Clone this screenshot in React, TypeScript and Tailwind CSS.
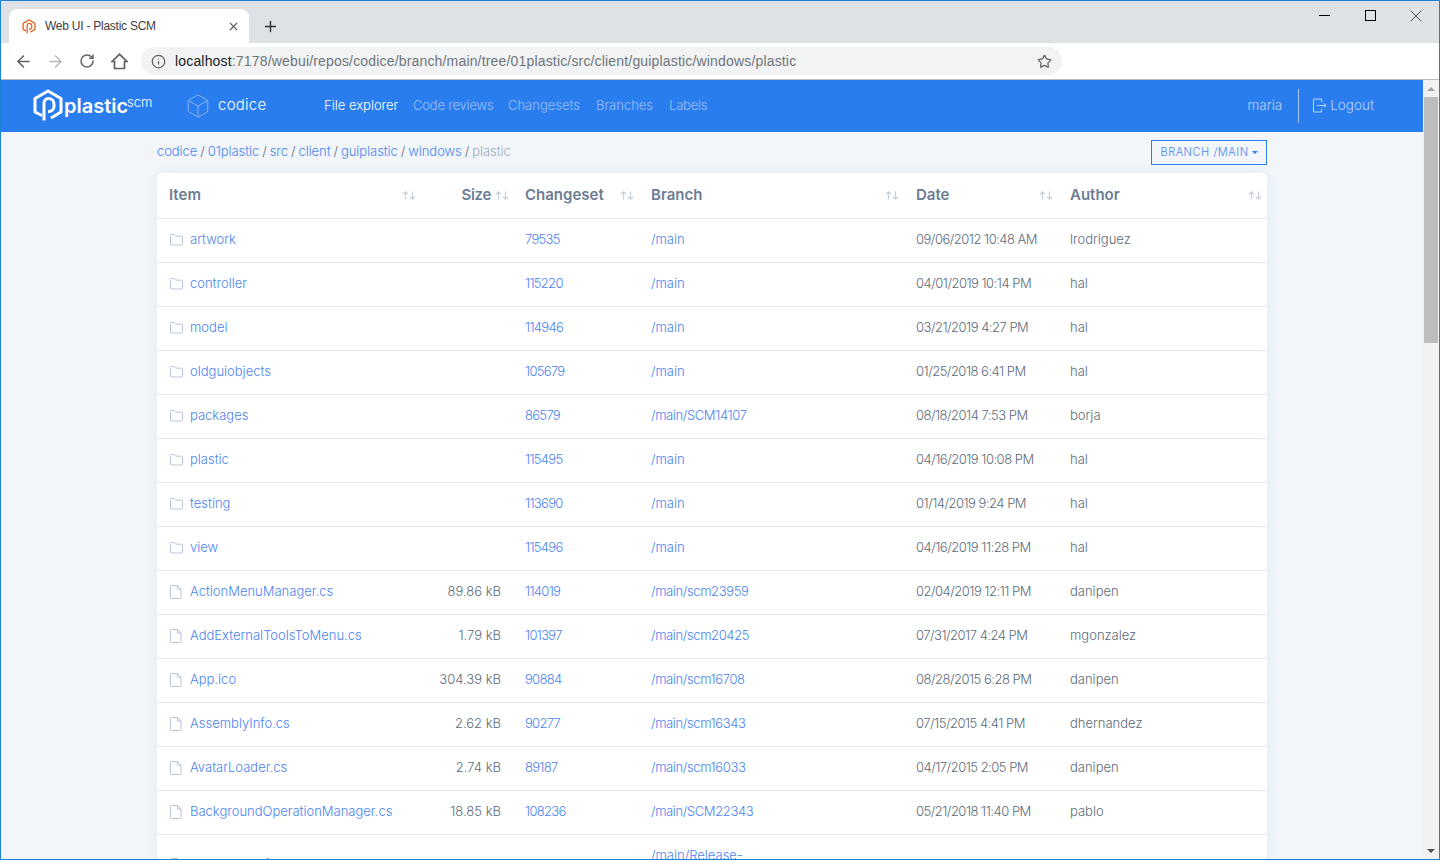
import { ArrowLeft, ArrowRight, RotateCw, Star, Info, Box, X, Plus } from "lucide-react";

type Row = { kind: "d" | "f"; name: string; size?: string; cs: string; branch: string; date: string; author: string };

const rows: Row[] = [
  { kind: "d", name: "artwork", cs: "79535", branch: "/main", date: "09/06/2012 10:48 AM", author: "lrodriguez" },
  { kind: "d", name: "controller", cs: "115220", branch: "/main", date: "04/01/2019 10:14 PM", author: "hal" },
  { kind: "d", name: "model", cs: "114946", branch: "/main", date: "03/21/2019 4:27 PM", author: "hal" },
  { kind: "d", name: "oldguiobjects", cs: "105679", branch: "/main", date: "01/25/2018 6:41 PM", author: "hal" },
  { kind: "d", name: "packages", cs: "86579", branch: "/main/SCM14107", date: "08/18/2014 7:53 PM", author: "borja" },
  { kind: "d", name: "plastic", cs: "115495", branch: "/main", date: "04/16/2019 10:08 PM", author: "hal" },
  { kind: "d", name: "testing", cs: "113690", branch: "/main", date: "01/14/2019 9:24 PM", author: "hal" },
  { kind: "d", name: "view", cs: "115496", branch: "/main", date: "04/16/2019 11:28 PM", author: "hal" },
  { kind: "f", name: "ActionMenuManager.cs", size: "89.86 kB", cs: "114019", branch: "/main/scm23959", date: "02/04/2019 12:11 PM", author: "danipen" },
  { kind: "f", name: "AddExternalToolsToMenu.cs", size: "1.79 kB", cs: "101397", branch: "/main/scm20425", date: "07/31/2017 4:24 PM", author: "mgonzalez" },
  { kind: "f", name: "App.ico", size: "304.39 kB", cs: "90884", branch: "/main/scm16708", date: "08/28/2015 6:28 PM", author: "danipen" },
  { kind: "f", name: "AssemblyInfo.cs", size: "2.62 kB", cs: "90277", branch: "/main/scm16343", date: "07/15/2015 4:41 PM", author: "dhernandez" },
  { kind: "f", name: "AvatarLoader.cs", size: "2.74 kB", cs: "89187", branch: "/main/scm16033", date: "04/17/2015 2:05 PM", author: "danipen" },
  { kind: "f", name: "BackgroundOperationManager.cs", size: "18.85 kB", cs: "108236", branch: "/main/SCM22343", date: "05/21/2018 11:40 PM", author: "pablo" },
];

const cols = "grid grid-cols-[264px_92px_126px_265px_154px_209px]";

function Sort() {
  return (
    <svg width="14" height="9" viewBox="0 0 14 9" fill="none" stroke="#c6d0da" strokeWidth="1.2" className="shrink-0">
      <path d="M3.5 8.5V1M1 3.2L3.5.8 6 3.2" />
      <path d="M10.5.5V8M8 5.8l2.5 2.4L13 5.8" />
    </svg>
  );
}

function FolderIcon() {
  return (
    <svg width="13" height="12" viewBox="0 0 13 12" fill="none" stroke="#b8c6d6" strokeWidth="1" className="shrink-0">
      <path d="M.5 10.2V1.3c0-.5.3-.8.8-.8h3l1.3 1.7h6c.5 0 .9.3.9.8v7.2c0 .5-.4.8-.9.8H1.3c-.5 0-.8-.3-.8-.8z" />
    </svg>
  );
}

function FileIcon() {
  return (
    <svg width="12" height="14" viewBox="0 0 12 14" fill="none" stroke="#b8c6d6" strokeWidth="1" className="shrink-0">
      <path d="M1.5.5h6l3.5 3.6v8.4c0 .6-.4 1-1 1h-8.500c-.6 0-1-.4-1-1V1.500c0-.6.4-1 1-1z" />
      <path d="M7.500.5v3.600H11" />
    </svg>
  );
}

function Hex({ color, w, h }: { color: string; w: number; h: number }) {
  return (
    <svg width={w} height={h} viewBox="0 0 30 33" fill="none" stroke={color} strokeWidth="3" strokeLinejoin="round" className="shrink-0">
      <path d="M9 26.500L2 23V9.500L15 2l13 7.500V23l-10 6" />
      <path d="M11 31.500V13.500a4.500 4.500 0 0 1 4.500-4 5.500 5.500 0 0 1 5.500 5.500v2.500a5 5 0 0 1-5.500 5H15" />
    </svg>
  );
}

function Logout() {
  return (
    <svg width="15" height="15" viewBox="0 0 15 15" fill="none" stroke="#bcd5fa" strokeWidth="1" strokeLinejoin="round" className="ml-[13px] shrink-0">
      <path d="M9.500 4V1H1.500v13h8v-3" />
      <path d="M5 7.500h9M11.800 5.300l2.200 2.200-2.200 2.200" />
    </svg>
  );
}

function Crumb({ children }: { children: string }) {
  return <span className="text-[#4c84f0]">{children}</span>;
}

export default function App() {
  const sep = <span className="text-[#5d6b7a] mx-[3px]">/</span>;
  return (
    <div className="w-[1440px] h-[860px] overflow-hidden flex flex-col border border-[#1883d7] font-['Inter',sans-serif] bg-white">
      {/* tab strip */}
      <div className="h-[42px] shrink-0 bg-[#dee1e6] flex items-end pl-2 relative">
        <div className="w-[240px] h-[34px] bg-white rounded-t-lg flex items-center pl-[13px] pr-[9px] gap-[9px]">
          <Hex color="#e4682a" w={14} h={15} />
          <span className="text-[12px] text-[#3c4043] font-['Liberation_Sans',sans-serif] tracking-[-0.25px] flex-1">Web UI - Plastic SCM</span>
          <X size={13} strokeWidth={2.2} className="text-[#5f6368]" />
        </div>
        <div className="ml-[13px] h-[34px] flex items-center">
          <Plus size={17} strokeWidth={2} className="text-[#303134]" />
        </div>
        <div className="flex-1 h-full flex justify-end items-start">
          <div className="w-[46px] h-[29px] flex items-center justify-center"><div className="w-[11px] h-px bg-black" /></div>
          <div className="w-[46px] h-[29px] flex items-center justify-center"><div className="w-[11px] h-[11px] border border-black" /></div>
          <div className="w-[46px] h-[29px] flex items-center justify-center"><X size={20} strokeWidth={0.8} className="text-black" /></div>
        </div>
      </div>
      {/* toolbar */}
      <div className="h-[37px] shrink-0 bg-white border-b border-[#b9bbbd] flex items-center pl-[12px]">
        <div className="w-[20px] flex justify-center"><ArrowLeft size={19} strokeWidth={2} className="text-[#5f6368]" /></div>
        <div className="w-[20px] ml-[12px] flex justify-center"><ArrowRight size={19} strokeWidth={2} className="text-[#b5b7ba]" /></div>
        <div className="w-[20px] ml-[12px] flex justify-center"><RotateCw size={16} strokeWidth={2.2} className="text-[#5f6368]" /></div>
        <div className="w-[20px] ml-[12px] flex justify-center">
          <svg width="17" height="17" viewBox="0 0 17 17" fill="none" stroke="#5f6368" strokeWidth="1.700"><path d="M1 8.500L8.500 1.300 16 8.500h-2.500v7h-10v-7z" /></svg>
        </div>
        <div className="ml-[12px] w-[921px] h-[28px] rounded-full bg-[#f1f3f4] flex items-center pl-[10px] pr-[10px]">
          <Info size={15} strokeWidth={2} className="text-[#5f6368]" />
          <span className="ml-[9px] flex-1 text-[14px] font-['Liberation_Sans',sans-serif] text-[#70757a] tracking-[0.17px]"><span className="text-[#202124]">localhost</span>:7178/webui/repos/codice/branch/main/tree/01plastic/src/client/guiplastic/windows/plastic</span>
          <Star size={15} strokeWidth={2} className="text-[#5f6368]" />
        </div>
      </div>
      {/* page */}
      <div className="flex-1 min-h-0 flex">
        <div className="flex-1 min-w-0 bg-[#f2f6fa] overflow-hidden">
          <div className="h-[52px] bg-[#2a7def] flex items-center pl-[32px] pr-[49px] font-light pb-px">
            <Hex color="#ffffff" w={30} h={33} />
            <span className="ml-[1px] text-[20px] font-semibold text-white leading-none w-[63px] whitespace-nowrap">plastic</span>
            <span className="text-[13px] font-light text-white leading-none mb-[6px] w-[27px] whitespace-nowrap">scm</span>
            <Box size={26} strokeWidth={0.9} className="ml-[31px] text-[#8fb5f0]" />
            <span className="ml-[7px] text-[15px] text-white w-[106px] tracking-[0.25px]">codice</span>
            <span className="text-[13px] text-white w-[89px] whitespace-nowrap">File explorer</span>
            <span className="text-[13px] text-[#9cc0f6] w-[95px] whitespace-nowrap tracking-[-0.2px]">Code reviews</span>
            <span className="text-[13px] text-[#9cc0f6] w-[88px] whitespace-nowrap">Changesets</span>
            <span className="text-[13px] text-[#9cc0f6] w-[73px] whitespace-nowrap">Branches</span>
            <span className="text-[13px] text-[#9cc0f6] whitespace-nowrap tracking-[-0.2px]">Labels</span>
            <span className="ml-auto text-[13.5px] text-[#bcd5fa]">maria</span>
            <div className="ml-[16px] w-px h-[34px] bg-[#a9c9f8]" />
            <Logout />
            <span className="ml-[3px] text-[13.5px] text-[#bcd5fa]">Logout</span>
          </div>
          <div className="w-[1110px] mx-auto pt-2">
            <div className="flex items-center justify-between h-[25px] mb-2 text-[13px] font-light">
              <div className="pb-[2px] tracking-[-0.06px]">
                <Crumb>codice</Crumb>{sep}<Crumb>01plastic</Crumb>{sep}<Crumb>src</Crumb>{sep}<Crumb>client</Crumb>{sep}<Crumb>guiplastic</Crumb>{sep}<Crumb>windows</Crumb>{sep}<span className="text-[#9fabb8]">plastic</span>
              </div>
              <div className="w-[116px] h-[25px] border border-[#2a7def] flex items-center justify-center gap-[3px] text-[11px] text-[#4c84f0] tracking-[0.55px]">
                BRANCH /MAIN
                <span className="w-0 h-0 border-x-[3px] border-x-transparent border-t-[3px] border-t-[#2a7def]" />
              </div>
            </div>
            <div className="bg-white rounded-t-md shadow-[0_0_12px_rgba(90,120,190,0.1)]">
              <div className={`${cols} h-[46px] border-b border-[#e1eaf4] text-[15px] font-semibold text-[#6c7d93]`}>
                <div className="flex items-center justify-between pl-3 pr-[5px]"><span>Item</span><Sort /></div>
                <div className="flex items-center justify-end gap-[4px] pr-[4px]"><span className="tracking-[-0.3px]">Size</span><Sort /></div>
                <div className="flex items-center justify-between pl-3 pr-[5px]"><span>Changeset</span><Sort /></div>
                <div className="flex items-center justify-between pl-3 pr-[5px]"><span>Branch</span><Sort /></div>
                <div className="flex items-center justify-between pl-3 pr-[5px]"><span>Date</span><Sort /></div>
                <div className="flex items-center justify-between pl-3 pr-[5px]"><span>Author</span><Sort /></div>
              </div>
              {rows.map((r) => (
                <div key={r.name} className={`${cols} h-[44px] border-b border-[#e1eaf4] text-[13px] font-light items-center pb-[2px]`}>
                  <div className="flex items-center pl-[13px] text-[#4c84f0] whitespace-nowrap">
                    <div className="w-[20px] flex">{r.kind === "d" ? <FolderIcon /> : <FileIcon />}</div>
                    {r.name}
                  </div>
                  <div className="text-right pr-3 text-[#5d6b7a]">{r.size}</div>
                  <div className="pl-3 text-[#4c84f0] tracking-[-0.7px]">{r.cs}</div>
                  <div className={r.branch === "/main" ? "pl-3 text-[#4c84f0]" : "pl-3 text-[#4c84f0] tracking-[-0.38px]"}>{r.branch}</div>
                  <div className="pl-3 text-[#5d6b7a] whitespace-nowrap tracking-[-0.5px]">{r.date}</div>
                  <div className="pl-3 text-[#5d6b7a]">{r.author}</div>
                </div>
              ))}
              <div className={`${cols} h-[62px] text-[13px] font-light items-center pb-[2px]`}>
                <div className="flex items-center pl-[13px] text-[#4c84f0] whitespace-nowrap">
                  <div className="w-[20px] flex"><FileIcon /></div>
                  CheckinConflictsHandler.cs
                </div>
                <div className="text-right pr-3 text-[#5d6b7a]">12.41 kB</div>
                <div className="pl-3 text-[#4c84f0] tracking-[-0.7px]">105679</div>
                <div className="pl-3 text-[#4c84f0]">/main/Release-<br />7.0.16</div>
                <div className="pl-3 text-[#5d6b7a] whitespace-nowrap tracking-[-0.5px]">01/25/2018 6:41 PM</div>
                <div className="pl-3 text-[#5d6b7a]">hal</div>
              </div>
            </div>
          </div>
        </div>
        {/* scrollbar */}
        <div className="w-[16px] shrink-0 bg-[#f1f1f1] flex flex-col">
          <div className="h-[17px] flex items-center justify-center"><span className="w-0 h-0 border-x-[4px] border-x-transparent border-b-[4px] border-b-[#a3a3a3]" /></div>
          <div className="h-[246px] mx-px bg-[#bdbdbd]" />
          <div className="flex-1" />
          <div className="h-[17px] flex items-center justify-center"><span className="w-0 h-0 border-x-[4px] border-x-transparent border-t-[4px] border-t-[#505050]" /></div>
        </div>
      </div>
    </div>
  );
}
